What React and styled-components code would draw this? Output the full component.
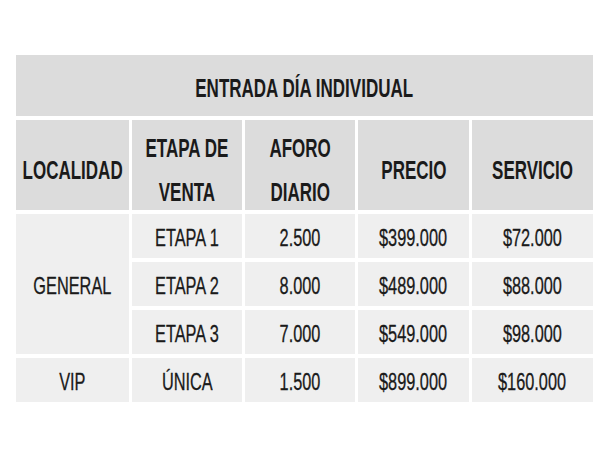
import styled, { createGlobalStyle } from "styled-components";

const GlobalStyle = createGlobalStyle`
  body {
    margin: 0;
    background: #ffffff;
    font-family: "Liberation Sans", Arial, sans-serif;
  }
`;

const rows = [
  { etapa: "ETAPA 1", aforo: "2.500", precio: "$399.000", servicio: "$72.000" },
  { etapa: "ETAPA 2", aforo: "8.000", precio: "$489.000", servicio: "$88.000" },
  { etapa: "ETAPA 3", aforo: "7.000", precio: "$549.000", servicio: "$98.000" },
];

export default function App() {
  return (
    <>
      <GlobalStyle />
      <Page>
        <Grid>
          <Title>
            <Narrow>ENTRADA DÍA INDIVIDUAL</Narrow>
          </Title>
          <Head>
            <Narrow>LOCALIDAD</Narrow>
          </Head>
          <Head>
            <Narrow>
              ETAPA DE
              <br />
              VENTA
            </Narrow>
          </Head>
          <Head>
            <Narrow>
              AFORO
              <br />
              DIARIO
            </Narrow>
          </Head>
          <Head>
            <Narrow>PRECIO</Narrow>
          </Head>
          <Head>
            <Narrow>SERVICIO</Narrow>
          </Head>

          <Cell $span={3}>
            <Narrow>GENERAL</Narrow>
          </Cell>
          {rows.map((r) => (
            <Row key={r.etapa}>
              <Cell>
                <Narrow>{r.etapa}</Narrow>
              </Cell>
              <Cell>
                <Narrow>{r.aforo}</Narrow>
              </Cell>
              <Cell>
                <Narrow>{r.precio}</Narrow>
              </Cell>
              <Cell>
                <Narrow>{r.servicio}</Narrow>
              </Cell>
            </Row>
          ))}

          <Cell>
            <Narrow>VIP</Narrow>
          </Cell>
          <Cell>
            <Narrow>ÚNICA</Narrow>
          </Cell>
          <Cell>
            <Narrow>1.500</Narrow>
          </Cell>
          <Cell>
            <Narrow>$899.000</Narrow>
          </Cell>
          <Cell>
            <Narrow>$160.000</Narrow>
          </Cell>
        </Grid>
      </Page>
    </>
  );
}

const Page = styled.div`
  padding: 55px 0 0 16px;
`;

const Grid = styled.div`
  display: grid;
  width: 577px;
  grid-template-columns: 113px 110px 110px 111px 1fr;
  grid-template-rows: 61px 90px 44px 44px 44px 44px;
  column-gap: 3px;
  row-gap: 4px;
  color: #1a1a1a;
`;

const Row = styled.div`
  display: contents;
`;

// condensed look: the reference uses a narrow grotesque
const Narrow = styled.span`
  display: inline-block;
  white-space: nowrap;
  transform: scaleX(0.68);
`;

const Title = styled.div`
  grid-column: 1 / -1;
  background: #dcdcdc;
  display: flex;
  align-items: center;
  justify-content: center;
  font-size: 25px;
  font-weight: 700;
  padding-top: 5px;
`;

const Head = styled.div`
  background: #dcdcdc;
  display: flex;
  align-items: center;
  justify-content: center;
  text-align: center;
  font-size: 25px;
  font-weight: 700;
  line-height: 44px;
  padding-top: 9px;
`;

const Cell = styled.div`
  background: #efefef;
  display: flex;
  align-items: center;
  justify-content: center;
  font-size: 24px;
  padding-top: 4px;
  -webkit-text-stroke: 0.3px #1a1a1a;
  grid-row: ${(p) => (p.$span ? `span ${p.$span}` : "auto")};
`;
